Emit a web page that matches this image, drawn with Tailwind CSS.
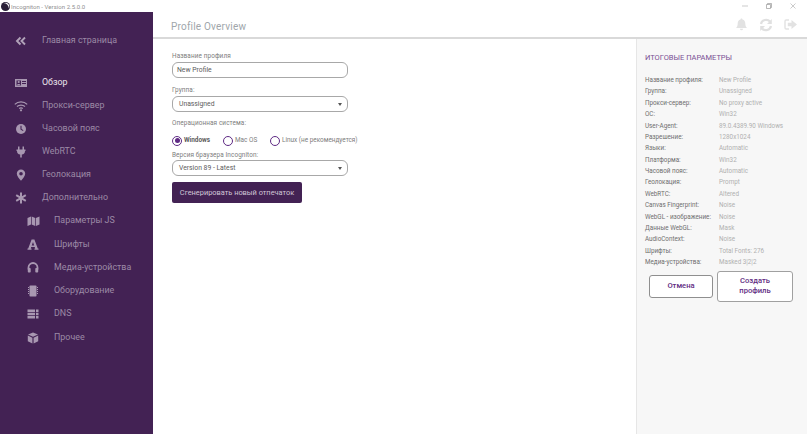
<!DOCTYPE html>
<html><head><meta charset="utf-8"><script src="https://cdn.jsdelivr.net/npm/@tailwindcss/browser@4"></script></head>
<body class="w-[807px] h-[434px] overflow-hidden bg-white font-['Roboto',sans-serif] flex flex-col">
<div class="h-[12px] flex items-center relative shrink-0">
  <svg class="w-[9px] h-[9px] ml-[1px] mr-[1px]" viewBox="0 0 10 10"><circle cx="5" cy="5" r="5" fill="#2a2038"/><path d="M3 1.5 A4 4 0 0 1 8.5 7 A5 5 0 0 0 3 1.5Z" fill="#fff"/></svg>
  <span class="text-[6px] text-[#8f8f8f] tracking-[0.05px]">Incogniton - Version 2.5.0.0</span>
  <div class="ml-auto flex items-center gap-[18px] mr-[11px]">
    <svg class="w-[6px] h-[6px]" viewBox="0 0 6 6"><path d="M0 3H6" stroke="#b5b5b5" stroke-width=".7"/></svg>
    <svg class="w-[6px] h-[6px]" viewBox="0 0 6 6"><path d="M.5 1.5H4.5V5.5H.5ZM1.5 1.5V.5H5.5V4.5H4.5" fill="none" stroke="#999" stroke-width=".7"/></svg>
    <svg class="w-[6px] h-[6px]" viewBox="0 0 6 6"><path d="M.5.5L5.5 5.5M5.5.5L.5 5.5" stroke="#b5b5b5" stroke-width=".7"/></svg>
  </div>
</div>
<div class="flex flex-1 min-h-0">
  <aside class="w-[153px] shrink-0 bg-[#432254] text-[8.9px] text-[#9c8aa6] flex flex-col pt-[17px]">
    <div class="flex items-center h-[23px] pl-[15px] gap-[15px]">
      <svg class="w-[12px] h-[12px]" viewBox="0 0 12 12" fill="none" stroke="#b0a2b8" stroke-width="1.9"><path d="M5.5 2.5L2 6L5.5 9.5M10 2.5L6.5 6L10 9.5"/></svg>
      <span>Главная страница</span>
    </div>
    <div class="h-[19px]"></div>
    <div class="flex items-center h-[23px] pl-[15px] gap-[15px] text-[#ece6ef]">
      <svg class="w-[12px] h-[12px]" viewBox="0 0 12 12"><path fill-rule="evenodd" fill="#a897b1" d="M0 2H12V10H0ZM1.5 3.5V8.5H6V3.5ZM7 4V5H11V4ZM7 6V7H11V6Z"/><circle cx="3.7" cy="5" r="1.1" fill="#a897b1"/><path d="M2 8.2C2 6.6 5.4 6.6 5.4 8.2Z" fill="#a897b1"/></svg>
      <span>Обзор</span>
    </div>
    <div class="flex items-center h-[23px] pl-[14px] gap-[14px]">
      <svg class="w-[14px] h-[12px]" viewBox="0 0 14 12" fill="none" stroke="#a897b1" stroke-width="1.3"><path d="M.8 4.4C4.2 1 9.8 1 13.2 4.4M3 6.6C5.2 4.6 8.8 4.6 11 6.6M5.2 8.6C6.2 7.8 7.8 7.8 8.8 8.6"/><circle cx="7" cy="10.3" r="1.1" fill="#a897b1" stroke="none"/></svg>
      <span>Прокси-сервер</span>
    </div>
    <div class="flex items-center h-[23px] pl-[15px] gap-[15px]">
      <svg class="w-[12px] h-[12px]" viewBox="0 0 12 12"><circle cx="6" cy="6" r="5" fill="#a897b1"/><path d="M6 2.8V6.3L8.2 7.6" fill="none" stroke="#432254" stroke-width="1.1"/></svg>
      <span>Часовой пояс</span>
    </div>
    <div class="flex items-center h-[23px] pl-[15px] gap-[15px]">
      <svg class="w-[12px] h-[12px]" viewBox="0 0 12 12" fill="#a897b1"><path d="M3 .5H4.5V3.5H7.5V.5H9V3.5H10.5V5H10C10 7.2 8.8 8.3 6.8 8.6V11.5H5.2V8.6C3.2 8.3 2 7.2 2 5H1.5V3.5H3Z"/></svg>
      <span>WebRTC</span>
    </div>
    <div class="flex items-center h-[23px] pl-[15px] gap-[15px]">
      <svg class="w-[12px] h-[12px]" viewBox="0 0 12 12"><path fill-rule="evenodd" fill="#a897b1" d="M6 .5A4.2 4.2 0 0 1 10.2 4.7C10.2 7 7.5 10 6 11.8C4.5 10 1.8 7 1.8 4.7A4.2 4.2 0 0 1 6 .5ZM6 3A1.8 1.8 0 1 0 6 6.6A1.8 1.8 0 1 0 6 3Z"/></svg>
      <span>Геолокация</span>
    </div>
    <div class="flex items-center h-[23px] pl-[15px] gap-[15px]">
      <svg class="w-[12px] h-[12px]" viewBox="0 0 12 12" stroke="#a897b1" stroke-width="2"><path d="M6 .5V11.5M1.2 3.2L10.8 8.8M10.8 3.2L1.2 8.8"/></svg>
      <span>Дополнительно</span>
    </div>
    <div class="flex items-center h-[23px] pl-[27px] gap-[15px]">
      <svg class="w-[13px] h-[12px] -mr-[1px]" viewBox="0 0 12 12" fill="#a897b1"><path d="M0 3L3.5 1.5V9.5L0 11ZM4.2 1.5L7.7 3V11L4.2 9.5ZM8.4 3L12 1.5V9.5L8.4 11Z"/></svg>
      <span>Параметры JS</span>
    </div>
    <div class="flex items-center h-[23px] pl-[27px] gap-[15px] translate-y-[0.5px]">
      <svg class="w-[12px] h-[12px]" viewBox="0 0 12 12"><path fill-rule="evenodd" fill="#a897b1" d="M4.6 1H7.4L10.8 10H11.5V11.2H7.5V10H8.2L7.7 8.4H4.2L3.7 10H4.5V11.2H.5V10H1.2ZM6 3.4L4.7 7H7.2Z"/></svg>
      <span>Шрифты</span>
    </div>
    <div class="flex items-center h-[23px] pl-[27px] gap-[15px] translate-y-[0.5px]">
      <svg class="w-[12px] h-[12px]" viewBox="0 0 12 12"><path d="M1.5 8V6A4.5 4.5 0 0 1 10.5 6V8" fill="none" stroke="#a897b1" stroke-width="1.8"/><rect x=".8" y="6.5" width="2.9" height="4.5" rx=".8" fill="#a897b1"/><rect x="8.3" y="6.5" width="2.9" height="4.5" rx=".8" fill="#a897b1"/></svg>
      <span>Медиа-устройства</span>
    </div>
    <div class="flex items-center h-[23px] pl-[27px] gap-[15px] translate-y-[1px]">
      <svg class="w-[12px] h-[12px]" viewBox="0 0 12 12" fill="#a897b1"><rect x="2.5" y=".5" width="7" height="11" rx=".8"/><path d="M1 2H2V3H1ZM1 4H2V5H1ZM1 6H2V7H1ZM1 8H2V9H1ZM10 2H11V3H10ZM10 4H11V5H10ZM10 6H11V7H10ZM10 8H11V9H10Z"/></svg>
      <span>Оборудование</span>
    </div>
    <div class="flex items-center h-[23px] pl-[27px] gap-[15px] translate-y-[1px]">
      <svg class="w-[12px] h-[12px]" viewBox="0 0 12 12" fill="#a897b1"><path d="M.5 1.5H8V4H.5ZM9 1.5H11.5V4H9ZM.5 4.8H8V7.2H.5ZM9 4.8H11.5V7.2H9ZM.5 8H8V10.5H.5ZM9 8H11.5V10.5H9Z"/></svg>
      <span>DNS</span>
    </div>
    <div class="flex items-center h-[23px] pl-[27px] gap-[15px] translate-y-[2px]">
      <svg class="w-[12px] h-[12px]" viewBox="0 0 12 12" fill="#a897b1"><path d="M6 .6L11 2.6L6 4.8L1 2.6ZM.8 3.6L5.4 5.7V11.4L.8 9.2ZM11.2 3.6V9.2L6.6 11.4V5.7Z"/></svg>
      <span>Прочее</span>
    </div>
  </aside>
  <div class="flex-1 min-w-0 flex flex-col">
    <header class="h-[27px] shrink-0 border-b-2 border-[#d9d9d9] flex items-center justify-between pl-[18px] pr-[10px]">
      <h1 class="text-[10px] text-[#a0a6ab] tracking-[0.2px] mt-[3px]">Profile Overview</h1>
      <div class="flex items-center gap-[11px]">
        <svg class="w-[13px] h-[13px]" viewBox="0 0 13 13" fill="#e2e2e2"><path d="M6.5.5C7.2.5 7.5 1 7.5 1.5C9.5 2 10.3 3.6 10.3 5.5C10.3 8 11 9 12 10H1C2 9 2.7 8 2.7 5.5C2.7 3.6 3.5 2 5.5 1.5C5.5 1 5.8.5 6.5.5ZM5 10.8H8A1.5 1.5 0 0 1 5 10.8Z"/></svg>
        <svg class="w-[14px] h-[14px]" viewBox="0 0 14 14" fill="none" stroke="#e0e0e0" stroke-width="2.2"><path d="M2 6A5.2 5.2 0 0 1 11 3.6M12 8A5.2 5.2 0 0 1 3 10.4"/><path d="M12.8 1V6H8ZM1.2 13V8H6Z" fill="#e0e0e0" stroke="none"/></svg>
        <svg class="w-[13px] h-[13px]" viewBox="0 0 13 13" fill="#e2e2e2"><path d="M7.5 2L13 6.5L7.5 11V8.3H3.8V4.7H7.5Z"/><path d="M5 2H2.2A1.2 1.2 0 0 0 1 3.2V9.8A1.2 1.2 0 0 0 2.2 11H5" fill="none" stroke="#e2e2e2" stroke-width="1.4"/></svg>
      </div>
    </header>
    <div class="flex flex-1 min-h-0">
      <main class="w-[483px] shrink-0 pl-[19px] pt-[12px] text-[#7d7d7d]">
        <label class="block text-[6.4px] tracking-[0.1px] leading-[10px]">Название профиля</label>
        <div class="mt-[1px] w-[176px] h-[16px] rounded-[6px] border border-[#a8a8a8] pl-[4px] flex items-center text-[6.8px] text-[#5c5c5c]">New Profile</div>
        <label class="block mt-[7px] text-[6.4px] tracking-[0.1px] leading-[10px]">Группа:</label>
        <div class="mt-[1px] w-[176px] h-[16px] rounded-[6px] border border-[#a8a8a8] pl-[6px] pr-[5px] flex items-center justify-between text-[6.8px] text-[#5c5c5c]">Unassigned<span class="w-0 h-0 border-x-[2.5px] border-x-transparent border-t-[3px] border-t-[#555]"></span></div>
        <label class="block mt-[6px] text-[6.4px] tracking-[0.1px] leading-[10px]">Операционная система:</label>
        <div class="mt-[7px] h-[11px] flex items-center text-[6.4px]">
          <span class="w-[10px] h-[10px] rounded-full border border-[#5e2a84] flex items-center justify-center"><span class="w-[5px] h-[5px] rounded-full bg-[#5e2a84]"></span></span>
          <span class="ml-[2px] w-[39px] font-bold text-[#5c5c5c]">Windows</span>
          <span class="w-[10px] h-[10px] rounded-full border border-[#5e2a84]"></span>
          <span class="ml-[2px] w-[35px]">Mac OS</span>
          <span class="w-[10px] h-[10px] rounded-full border border-[#5e2a84]"></span>
          <span class="ml-[2px]">Linux (не рекомендуется)</span>
        </div>
        <label class="block mt-[4px] text-[6.4px] tracking-[0.1px] leading-[10px]">Версия браузера Incogniton:</label>
        <div class="mt-[0px] w-[176px] h-[16px] rounded-[6px] border border-[#a8a8a8] pl-[6px] pr-[5px] flex items-center justify-between text-[6.8px] text-[#5c5c5c]">Version 89 - Latest<span class="w-0 h-0 border-x-[2.5px] border-x-transparent border-t-[3px] border-t-[#555]"></span></div>
        <button class="mt-[6px] block w-[130px] h-[21px] rounded-[2px] bg-[#432254] text-[#d0c6d6] text-[7.4px]">Сгенерировать новый отпечаток</button>
      </main>
      <section class="flex-1 bg-[#f7f7f7] border-l border-[#e6e6e6] pl-[8px] pt-[14px] text-[6.3px]">
        <h2 class="text-[7.5px] text-[#7a4f94] leading-[10px]">ИТОГОВЫЕ ПАРАМЕТРЫ</h2>
        <dl class="mt-[12px] grid grid-cols-[74px_1fr] auto-rows-[11.4px] items-center">
          <dt class="text-[#6e6e6e]">Название профиля:</dt><dd class="text-[#b0b0b0]">New Profile</dd>
          <dt class="text-[#6e6e6e]">Группа:</dt><dd class="text-[#b0b0b0]">Unassigned</dd>
          <dt class="text-[#6e6e6e]">Прокси-сервер:</dt><dd class="text-[#b0b0b0]">No proxy active</dd>
          <dt class="text-[#6e6e6e]">ОС:</dt><dd class="text-[#b0b0b0]">Win32</dd>
          <dt class="text-[#6e6e6e]">User-Agent:</dt><dd class="text-[#b0b0b0]">89.0.4389.90 Windows</dd>
          <dt class="text-[#6e6e6e]">Разрешение:</dt><dd class="text-[#b0b0b0]">1280x1024</dd>
          <dt class="text-[#6e6e6e]">Языки:</dt><dd class="text-[#b0b0b0]">Automatic</dd>
          <dt class="text-[#6e6e6e]">Платформа:</dt><dd class="text-[#b0b0b0]">Win32</dd>
          <dt class="text-[#6e6e6e]">Часовой пояс:</dt><dd class="text-[#b0b0b0]">Automatic</dd>
          <dt class="text-[#6e6e6e]">Геолокация:</dt><dd class="text-[#b0b0b0]">Prompt</dd>
          <dt class="text-[#6e6e6e]">WebRTC:</dt><dd class="text-[#b0b0b0]">Altered</dd>
          <dt class="text-[#6e6e6e]">Canvas Fingerprint:</dt><dd class="text-[#b0b0b0]">Noise</dd>
          <dt class="text-[#6e6e6e]">WebGL - изображение:</dt><dd class="text-[#b0b0b0]">Noise</dd>
          <dt class="text-[#6e6e6e]">Данные WebGL:</dt><dd class="text-[#b0b0b0]">Mask</dd>
          <dt class="text-[#6e6e6e]">AudioContext:</dt><dd class="text-[#b0b0b0]">Noise</dd>
          <dt class="text-[#6e6e6e]">Шрифты:</dt><dd class="text-[#b0b0b0]">Total Fonts: 276</dd>
          <dt class="text-[#6e6e6e]">Медиа-устройства:</dt><dd class="text-[#b0b0b0]">Masked 3|2|2</dd>
        </dl>
        <div class="mt-[2px] ml-[4px] flex items-center gap-[4px]">
          <button class="w-[64px] h-[23px] rounded-[3px] bg-white border border-[#8f8f8f] text-[#5f2c82] text-[7.6px] font-medium">Отмена</button>
          <button class="w-[76px] h-[31px] rounded-[3px] bg-white border border-[#a0a0a0] text-[#5f2c82] text-[7.6px] font-medium leading-[10px]">Создать<br>профиль</button>
        </div>
      </section>
    </div>
  </div>
</div>
</body></html>
